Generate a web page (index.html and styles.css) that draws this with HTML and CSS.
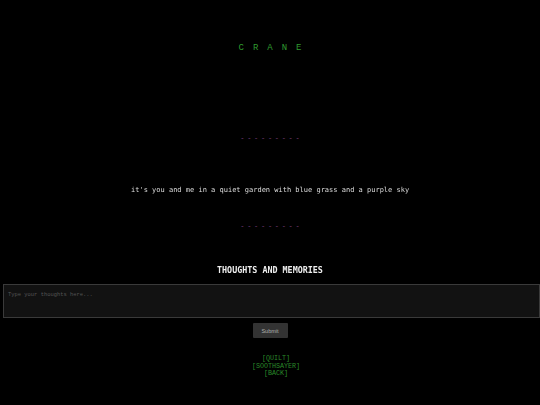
FILE: index.html
```html
<!DOCTYPE html>
<html>
<head>
<meta charset="utf-8">
<link rel="stylesheet" href="styles.css">
</head>
<body>
<main class="page">
  <h1 class="title">CRANE</h1>
  <div class="divider divider-top">---------</div>
  <p class="poem">it's you and me in a quiet garden with blue grass and a purple sky</p>
  <div class="divider divider-bottom">---------</div>
  <h2 class="section-title">THOUGHTS AND MEMORIES</h2>
  <form class="thoughts">
    <textarea class="thoughts-input" placeholder="Type your thoughts here..."></textarea>
    <button type="button" class="submit">Submit</button>
  </form>
  <nav class="links">
    <a href="#">[QUILT]</a>
    <a href="#">[SOOTHSAYER]</a>
    <a href="#">[BACK]</a>
  </nav>
</main>
</body>
</html>
```
FILE: styles.css
```css
html, body {
  margin: 0;
  padding: 0;
  background: #000;
}
.page {
  display: flex;
  flex-direction: column;
  align-items: center;
  padding-top: 42px;
  font-family: "DejaVu Sans Mono", monospace;
}
.title {
  margin: 0;
  font-family: "Liberation Mono", monospace;
  font-weight: normal;
  font-size: 9px;
  line-height: 12px;
  letter-spacing: 9px;
  padding-left: 9px;
  color: #2f9a2f;
}
.divider {
  font-family: "Liberation Mono", monospace;
  font-size: 7px;
  line-height: 8px;
  letter-spacing: 2.7px;
  padding-left: 2.7px;
  color: #7a3f7a;
}
.divider-top { margin-top: 80px; }
.divider-bottom { margin-top: 27px; }
.poem {
  margin: 44px 0 0;
  font-size: 7px;
  line-height: 9px;
  color: #dddddd;
  will-change: transform;
}
.section-title {
  margin: 35px 0 0;
  font-size: 8.4px;
  line-height: 10px;
  font-weight: bold;
  color: #eeeeee;
  will-change: transform;
}
.thoughts {
  align-self: stretch;
  display: flex;
  flex-direction: column;
  align-items: center;
  margin-top: 9px;
}
.thoughts-input {
  display: block;
  align-self: flex-end;
  box-sizing: border-box;
  width: calc(100% - 3px);
  height: 34px;
  margin: 0;
  padding: 6px 4px;
  background: #121212;
  border: 1px solid #3a3a3a;
  color: #cccccc;
  font-family: "Liberation Mono", monospace;
  font-size: 5.45px;
  resize: none;
  outline: none;
}
.thoughts-input::placeholder {
  color: #555555;
}
.submit {
  margin-top: 5px;
  width: 35px;
  height: 15px;
  padding: 0;
  border: none;
  border-radius: 1px;
  background: #333333;
  color: #b0b0b0;
  font-family: "Liberation Sans", sans-serif;
  font-size: 5.5px;
}
.links {
  display: flex;
  flex-direction: column;
  align-items: center;
  margin-top: 17px;
  padding-left: 12px;
}
.links a {
  font-family: "Liberation Mono", monospace;
  font-size: 6.7px;
  line-height: 7.5px;
  color: #2a8a2a;
  text-decoration: none;
}
```
